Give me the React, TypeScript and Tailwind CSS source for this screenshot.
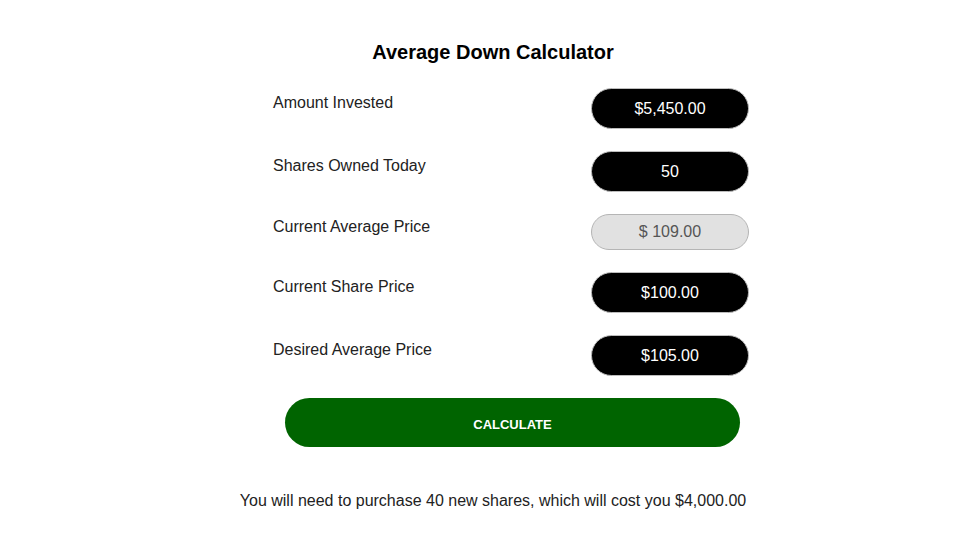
import React from "react";

const rows: { label: string; value: string; readonly?: boolean }[] = [
  { label: "Amount Invested", value: "$5,450.00" },
  { label: "Shares Owned Today", value: "50" },
  { label: "Current Average Price", value: "$ 109.00", readonly: true },
  { label: "Current Share Price", value: "$100.00" },
  { label: "Desired Average Price", value: "$105.00" },
];

export default function App() {
  return (
    <div
      className="min-h-[550px] w-full bg-white flex justify-center pl-[7px] pt-[40px]"
      style={{ fontFamily: '"Liberation Sans", Arial, sans-serif' }}
    >
      <div className="w-[514px] flex flex-col">
        <h1 className="text-center text-[20px] leading-[24px] font-bold text-black mb-[24px]">
          Average Down Calculator
        </h1>
        <div className="flex flex-col pl-[37px] pr-[1px]">
          {rows.map((r) => (
            <div key={r.label} className="flex justify-between items-start mb-[22px]">
              <label
                className={`text-[16px] leading-[20px] text-[#222] ${r.readonly ? "pt-[3px]" : "pt-[5px]"}`}
              >
                {r.label}
              </label>
              {r.readonly ? (
                <div className="w-[158px] h-[36px] rounded-full border border-[#b5b5b5] bg-[#e1e1e1] flex items-center justify-center text-[16px] text-[#555]">
                  {r.value}
                </div>
              ) : (
                <div className="w-[158px] h-[41px] rounded-full border border-[#bdbdbd] bg-black flex items-center justify-center text-[16px] text-white">
                  {r.value}
                </div>
              )}
            </div>
          ))}
          <button className="ml-[12px] w-[455px] h-[49px] rounded-full bg-[#006400] text-white text-[13px] font-bold pt-[4px]">
            CALCULATE
          </button>
        </div>
        <p className="mt-[44px] text-center text-[16px] leading-[20px] text-[#222]">
          You will need to purchase 40 new shares, which will cost you $4,000.00
        </p>
      </div>
    </div>
  );
}
